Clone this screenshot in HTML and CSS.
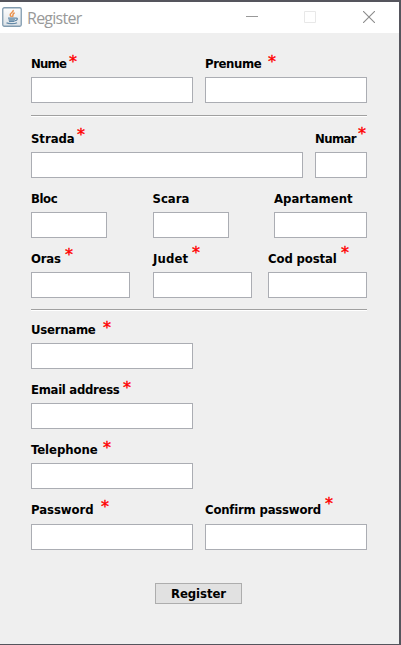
FILE: index.html
```html
<!DOCTYPE html>
<html lang="ro">
<head>
<meta charset="utf-8">
<title>Register</title>
<link rel="stylesheet" href="styles.css">
</head>
<body>
<div class="window">
  <header class="titlebar">
    <svg class="app-icon" width="20" height="20" viewBox="0 0 20 20" fill="none">
      <defs><linearGradient id="tile" x2="0" y2="1"><stop stop-color="#fdfdfd"/><stop offset="1" stop-color="#dce2e7"/></linearGradient></defs>
      <rect x=".75" y=".75" width="18.5" height="18.5" rx="1.5" fill="url(#tile)" stroke="#829cb0" stroke-width="1.3"/>
      <path d="M11.2 3C12 5.600 7 6 8.300 8.500L9.600 10M12.600 5.800C9.700 7.200 11.800 8 10.400 10" stroke="#eb914c" stroke-width="1.500"/>
      <path d="M6 11.200H13.500M6.500 12.800H13M7 14.300H12.500M13.500 11.200C16.500 10.500 15.500 13.500 13 13.700M4.500 15.700C6 17 13 17 15 15.700" stroke="#648aa8" stroke-width="1.300"/>
    </svg>
    <h1 class="title">Register</h1>
    <div class="controls">
      <svg width="12" height="12" viewBox="0 0 12 12"><path d="M0 5.500H12" stroke="#999"/></svg>
      <svg width="12" height="12" viewBox="0 0 12 12"><path d="M.5.5h11v11H.5z" fill="none" stroke="#e8e8e8"/></svg>
      <svg class="close" width="12" height="12" viewBox="0 0 12 12"><path d="M0 0L12 12M12 0L0 12" stroke="#8c8c8c" stroke-width="1.100"/></svg>
    </div>
  </header>
  <form class="form">
    <div class="row halves">
      <label class="field"><span class="label"><span class="name w-nume">Nume</span><span class="star">*</span></span><input type="text"></label>
      <label class="field"><span class="label"><span class="name w-prenume">Prenume</span><span class="star">*</span></span><input type="text"></label>
    </div>
    <hr>
    <div class="row street">
      <label class="field"><span class="label"><span class="name w-strada">Strada</span><span class="star up3">*</span></span><input type="text"></label>
      <label class="field"><span class="label"><span class="name w-numar">Numar</span><span class="star up4">*</span></span><input type="text"></label>
    </div>
    <div class="row building">
      <label class="field"><span class="label"><span class="name w-bloc">Bloc</span></span><input type="text"></label>
      <label class="field"><span class="label"><span class="name w-scara">Scara</span></span><input type="text"></label>
      <label class="field"><span class="label"><span class="name w-apartament">Apartament</span></span><input type="text"></label>
    </div>
    <div class="row city">
      <label class="field"><span class="label"><span class="name w-oras">Oras</span><span class="star up3">*</span></span><input type="text"></label>
      <label class="field"><span class="label"><span class="name w-judet">Judet</span><span class="star up5">*</span></span><input type="text"></label>
      <label class="field"><span class="label"><span class="name w-cod">Cod postal</span><span class="star up5">*</span></span><input type="text"></label>
    </div>
    <hr class="account-rule">
    <div class="row halves account">
      <label class="field"><span class="label"><span class="name w-username">Username</span><span class="star">*</span></span><input type="text"></label>
    </div>
    <div class="row halves">
      <label class="field"><span class="label"><span class="name w-email">Email address</span><span class="star">*</span></span><input type="text"></label>
    </div>
    <div class="row halves">
      <label class="field"><span class="label"><span class="name w-telephone">Telephone</span><span class="star">*</span></span><input type="text"></label>
    </div>
    <div class="row halves passwords">
      <label class="field"><span class="label"><span class="name w-password">Password</span><span class="star up2">*</span></span><input type="password"></label>
      <label class="field"><span class="label"><span class="name w-confirm">Confirm password</span><span class="star up6">*</span></span><input type="password"></label>
    </div>
    <button type="button" class="submit">Register</button>
  </form>
</div>
</body>
</html>
```
FILE: styles.css
```css
* { box-sizing: border-box; }
body { margin: 0; overflow: hidden; }
.window {
  width: 401px;
  height: 645px;
  border: solid #55555d;
  border-width: 2px 2px 1px 0;
  background: #efefef;
}
.titlebar {
  display: flex;
  align-items: center;
  height: 31px;
  padding: 0 24px 0 2px;
  background: #fff;
}
.app-icon { margin-top: -2px; }
.title {
  margin: 0 0 0 5px;
  font: 400 16px/24px "Open Sans", sans-serif;
  letter-spacing: -.75px;
  color: #999;
}
.controls { display: flex; gap: 46px; margin: -1px 0 0 auto; }
.controls svg { display: block; }
.controls .close { margin-left: 1px; }
.form {
  display: flex;
  flex-direction: column;
  width: 336px;
  margin: 20px 0 0 31px;
  font: 700 13px/20px "DejaVu Sans Condensed", "DejaVu Sans", sans-serif;
  color: #000;
}
.row { display: grid; margin-bottom: 10px; }
.halves { grid-template-columns: 162px 162px; gap: 12px; }
.street { grid-template-columns: 272px 52px; gap: 12px; }
.building { grid-template-columns: 76px 76px 93px; justify-content: space-between; }
.city { grid-template-columns: 99px 99px 99px; column-gap: 23px; }
.city .field:last-child { margin-left: -7px; margin-right: 7px; }
.field { display: block; }
.label { display: flex; height: 24px; white-space: nowrap; }
.name { flex: none; padding-top: 1px; letter-spacing: -.2px; }
.star {
  margin-top: -1px;
  font: 400 16px/20px "DejaVu Sans", sans-serif;
  color: #f00;
  -webkit-text-stroke: .4px #f00;
}
.up2 { margin-top: -2px; }
.up3 { margin-top: -3px; }
.up4 { margin-top: -4px; }
.up5 { margin-top: -5px; }
.up6 { margin-top: -5px; }
.w-nume { width: 38px; letter-spacing: -.8px; }
.w-prenume { width: 63px; letter-spacing: -.4px; }
.w-strada { width: 46px; letter-spacing: -.05px; }
.w-numar { width: 43px; letter-spacing: -.6px; }
.w-bloc { letter-spacing: -.4px; }
.w-scara { letter-spacing: 0; }
.w-apartament { letter-spacing: 0; }
.w-oras { width: 34px; }
.w-judet { width: 39px; letter-spacing: .15px; }
.w-cod { width: 73px; letter-spacing: -.12px; }
.w-username { width: 72px; letter-spacing: -.25px; }
.w-email { width: 92px; letter-spacing: -.3px; }
.w-telephone { width: 72px; letter-spacing: -.05px; }
.w-password { width: 70px; letter-spacing: -.05px; }
.w-confirm { width: 120px; }
input {
  display: block;
  width: 100%;
  height: 26px;
  padding: 2px 4px;
  border: 1px solid #abadb3;
  border-radius: 0;
  background: #fff;
  font: inherit;
}
hr {
  width: 100%;
  height: 2px;
  margin: 2px 0 11px;
  border: 0;
  border-top: 1px solid #a0a0a0;
  background: #fff;
}
.account-rule { margin: 1px 0 8px; }
.passwords .label { height: 25px; }
.submit {
  align-self: flex-start;
  width: 87px;
  height: 21px;
  margin: 23px 0 0 124px;
  padding: 0;
  border: 1px solid #adadad;
  background: #e1e1e1;
  font: inherit;
  line-height: 19px;
  letter-spacing: -.1px;
  color: #000;
}
```
